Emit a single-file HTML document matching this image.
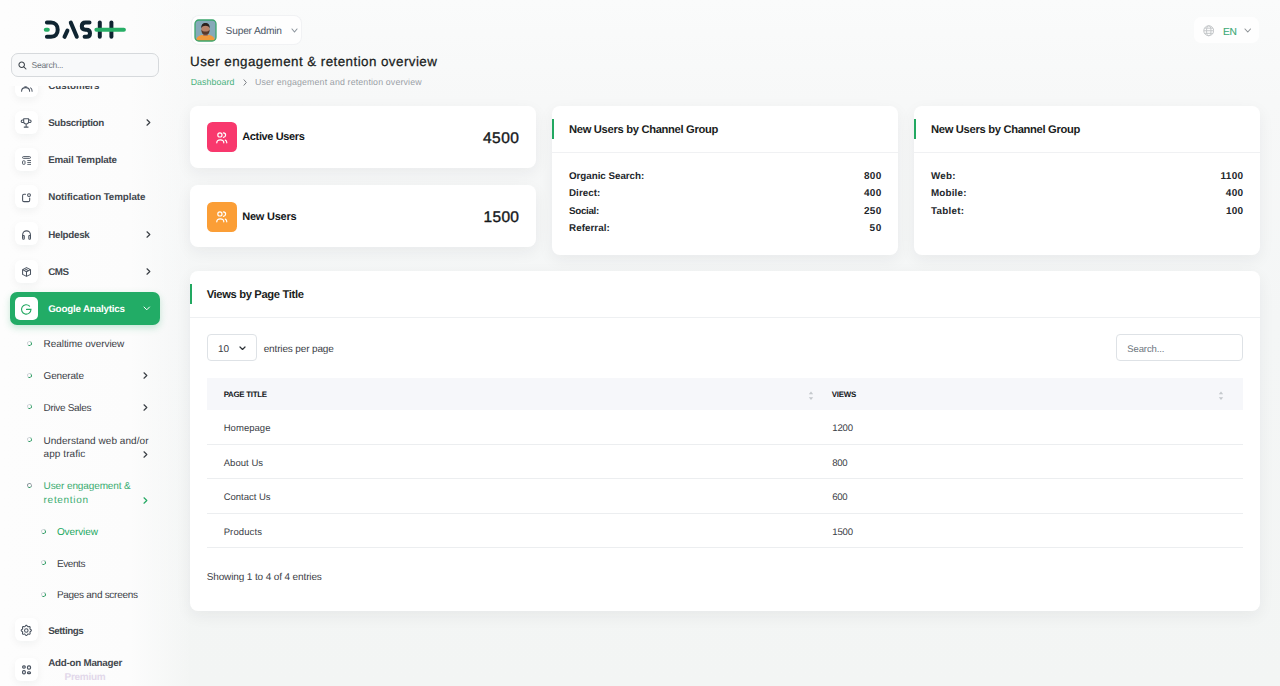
<!DOCTYPE html><html><head><meta charset="utf-8"><style>
*{box-sizing:border-box;margin:0;padding:0}
html,body{width:1280px;height:686px;overflow:hidden}
body{font-family:"Liberation Sans",sans-serif;text-rendering:geometricPrecision;background:linear-gradient(180deg,#fafbfb 0px,#f7f8f8 100px,#f4f6f6 320px,#f3f5f4 686px);position:relative;color:#1f2328}
.a{position:absolute;white-space:nowrap}
.t{position:absolute;white-space:nowrap}
#side{position:absolute;left:0;top:0;width:192px;height:686px;background:linear-gradient(90deg,#fdfdfd 0px,#fcfcfc 130px,rgba(252,252,252,0) 192px)}
.nb{position:absolute;width:23px;height:23px;background:#fff;border-radius:6px;box-shadow:0 3px 8px rgba(20,30,40,.05)}
.dot{position:absolute;width:5px;height:5px;border-radius:50%;border:1.2px solid #cfd4d8;border-right-color:#2f9c64;border-bottom-color:#2f9c64;transform:rotate(-10deg)}
.card{position:absolute;background:#fff;border-radius:8px;box-shadow:0 5px 16px rgba(30,40,50,.06)}
svg{display:block}
</style></head><body>
<div id="side">
<div class="a" style="left:0;top:86px;width:190px;height:600px;overflow:hidden">
<div class="a" style="left:0;top:-86px;width:190px;height:800px">
<div class="nb" style="left:15px;top:74.0px"></div>
<svg class="a" style="left:14px;top:73.5px" width="24" height="24" viewBox="0 0 24 24"><path d="M7.6 17.2C7.6 15 9.2 13.6 11.6 13.6C14 13.6 15.6 15 15.6 17.2M16.6 13.9C17.6 14.4 18.1 15.6 18.1 17.2" fill="none" stroke="#4a5360" stroke-width="1.05" stroke-linecap="round"/><circle cx="11.6" cy="10" r="2.1" fill="none" stroke="#4a5360" stroke-width="1.05"/></svg>
<div class="t" style="top:82px;font-size:9.8px;line-height:9.8px;font-weight:bold;color:#43484e;left:48.20px;">Customers</div>
<div class="nb" style="left:15px;top:110.5px"></div>
<svg class="a" style="left:14px;top:110px" width="24" height="24" viewBox="0 0 24 24"><path d="M9.7 8.7H14.6V11.6A2.45 2.45 0 0 1 9.7 11.6ZM9.7 10H8.4A1.2 1.2 0 0 0 8.4 12.4H9.9M14.6 10H15.9A1.2 1.2 0 0 1 15.9 12.4H14.4M12.15 14.2V17M10.2 17.1H14.1" fill="none" stroke="#4a5360" stroke-width="1.05" stroke-linecap="round" stroke-linejoin="round"/></svg>
<div class="t" style="top:119px;font-size:9.8px;line-height:9.8px;font-weight:bold;color:#43484e;letter-spacing:-0.352px;left:48.20px;">Subscription</div>
<svg class="a" style="left:146px;top:118.8px" width="5" height="7" viewBox="0 0 5 7"><path d="M1 .8 L3.8 3.5 L1 6.2" fill="none" stroke="#3a3f45" stroke-width="1.2" stroke-linecap="round" stroke-linejoin="round"/></svg>
<div class="nb" style="left:15px;top:147.8px"></div>
<svg class="a" style="left:14px;top:147px" width="24" height="24" viewBox="0 0 24 24"><rect x="8.55" y="9.6" width="7.95" height="1.75" rx=".85" fill="none" stroke="#4a5360" stroke-width=".95"/><rect x="8.55" y="13.8" width="2.45" height="3.5" rx=".7" fill="none" stroke="#4a5360" stroke-width=".95"/><path d="M13.3 13.5H17M13.3 15.45H17M13.3 17.4H17" stroke="#4a5360" stroke-width=".9"/></svg>
<div class="t" style="top:156px;font-size:9.8px;line-height:9.8px;font-weight:bold;color:#43484e;letter-spacing:-0.174px;left:48.20px;">Email Template</div>
<div class="nb" style="left:15px;top:185.0px"></div>
<svg class="a" style="left:14px;top:185px" width="24" height="24" viewBox="0 0 24 24"><path d="M11.5 9.3H10A1.4 1.4 0 0 0 8.6 10.7V15.2A1.4 1.4 0 0 0 10 16.6H14.3A1.4 1.4 0 0 0 15.7 15.2V13.1" fill="none" stroke="#4a5360" stroke-width="1.05" stroke-linecap="round"/><circle cx="15" cy="10.1" r="1.45" fill="none" stroke="#4a5360" stroke-width="1.05"/></svg>
<div class="t" style="top:193px;font-size:9.8px;line-height:9.8px;font-weight:bold;color:#43484e;letter-spacing:-0.085px;left:48.20px;">Notification Template</div>
<div class="nb" style="left:15px;top:222.2px"></div>
<svg class="a" style="left:14px;top:222px" width="24" height="24" viewBox="0 0 24 24"><path d="M8.65 16V12.75A3.9 3.9 0 0 1 16.45 12.75V16" fill="none" stroke="#4a5360" stroke-width="1.05"/><rect x="8.65" y="13.4" width="1.65" height="3.8" rx=".7" fill="none" stroke="#4a5360" stroke-width="1.05"/><rect x="14.8" y="13.4" width="1.65" height="3.8" rx=".7" fill="none" stroke="#4a5360" stroke-width="1.05"/></svg>
<div class="t" style="top:231px;font-size:9.8px;line-height:9.8px;font-weight:bold;color:#43484e;letter-spacing:-0.280px;left:48.20px;">Helpdesk</div>
<svg class="a" style="left:146px;top:230.5px" width="5" height="7" viewBox="0 0 5 7"><path d="M1 .8 L3.8 3.5 L1 6.2" fill="none" stroke="#3a3f45" stroke-width="1.2" stroke-linecap="round" stroke-linejoin="round"/></svg>
<div class="nb" style="left:15px;top:259.5px"></div>
<svg class="a" style="left:14px;top:259px" width="24" height="24" viewBox="0 0 24 24"><path d="M12.5 8.6L16.5 10.6V15.4L12.5 17.4L8.6 15.4V10.6ZM8.6 10.6L12.5 12.8L16.5 10.6M12.5 12.8V17.4M10.5 9.6L14.5 11.7" fill="none" stroke="#4a5360" stroke-width="1.05" stroke-linejoin="round"/></svg>
<div class="t" style="top:268px;font-size:9.8px;line-height:9.8px;font-weight:bold;color:#43484e;letter-spacing:-0.450px;left:48.20px;">CMS</div>
<svg class="a" style="left:146px;top:267.8px" width="5" height="7" viewBox="0 0 5 7"><path d="M1 .8 L3.8 3.5 L1 6.2" fill="none" stroke="#3a3f45" stroke-width="1.2" stroke-linecap="round" stroke-linejoin="round"/></svg>
<div class="a" style="left:10px;top:292.3px;width:150px;height:32.5px;background:#22ac66;border-radius:7px;box-shadow:0 3px 7px rgba(34,172,102,.25)"></div>
<div class="a" style="left:15px;top:297.2px;width:23px;height:23px;background:#fff;border-radius:5px"></div>
<svg class="a" style="left:14px;top:297px" width="24" height="24" viewBox="0 0 24 24"><path d="M15.57 9.08A4.7 4.7 0 1 0 16.95 12.4H12.5" fill="none" stroke="#22a861" stroke-width="1.1" stroke-linecap="round"/></svg>
<div class="t" style="top:305px;font-size:9.8px;line-height:9.8px;font-weight:bold;color:#fff;letter-spacing:-0.191px;left:48.20px;">Google Analytics</div>
<svg class="a" style="left:143.3px;top:306.2px" width="7.5" height="4.8" viewBox="0 0 7.5 4.8"><path d="M1 1 L3.75 3.8 L6.5 1" fill="none" stroke="#fff" stroke-width="1.0" stroke-linecap="round" stroke-linejoin="round"/></svg>
<div class="dot" style="left:27px;top:340.5px"></div>
<div class="t" style="top:340px;font-size:10px;line-height:10px;font-weight:normal;color:#3b4046;letter-spacing:-0.063px;left:43.60px;">Realtime overview</div>
<div class="dot" style="left:27px;top:372.6px"></div>
<div class="t" style="top:372px;font-size:10px;line-height:10px;font-weight:normal;color:#3b4046;letter-spacing:-0.186px;left:43.60px;">Generate</div>
<svg class="a" style="left:142.5px;top:372.1px" width="5" height="7" viewBox="0 0 5 7"><path d="M1 .8 L3.8 3.5 L1 6.2" fill="none" stroke="#3a3f45" stroke-width="1.2" stroke-linecap="round" stroke-linejoin="round"/></svg>
<div class="dot" style="left:27px;top:404.2px"></div>
<div class="t" style="top:404px;font-size:10px;line-height:10px;font-weight:normal;color:#3b4046;letter-spacing:-0.334px;left:43.60px;">Drive Sales</div>
<svg class="a" style="left:142.5px;top:403.7px" width="5" height="7" viewBox="0 0 5 7"><path d="M1 .8 L3.8 3.5 L1 6.2" fill="none" stroke="#3a3f45" stroke-width="1.2" stroke-linecap="round" stroke-linejoin="round"/></svg>
<div class="dot" style="left:27px;top:437px"></div>
<div class="t" style="top:437px;font-size:10px;line-height:10px;font-weight:normal;color:#3b4046;letter-spacing:0.057px;left:43.40px;">Understand web and/or</div>
<div class="t" style="top:450px;font-size:10px;line-height:10px;font-weight:normal;color:#3b4046;letter-spacing:0.062px;left:43.60px;">app trafic</div>
<svg class="a" style="left:142.5px;top:451px" width="5" height="7" viewBox="0 0 5 7"><path d="M1 .8 L3.8 3.5 L1 6.2" fill="none" stroke="#3a3f45" stroke-width="1.2" stroke-linecap="round" stroke-linejoin="round"/></svg>
<div class="dot" style="left:27px;top:483px;border-color:#8f9aa0;border-bottom-color:#2f9c64"></div>
<div class="t" style="top:482px;font-size:10px;line-height:10px;font-weight:normal;color:#3aac70;letter-spacing:-0.110px;left:43.60px;">User engagement &amp;</div>
<div class="t" style="top:496px;font-size:10px;line-height:10px;font-weight:normal;color:#3aac70;letter-spacing:0.697px;left:43.60px;">retention</div>
<svg class="a" style="left:142.5px;top:497px" width="5" height="7" viewBox="0 0 5 7"><path d="M1 .8 L3.8 3.5 L1 6.2" fill="none" stroke="#22a861" stroke-width="1.2" stroke-linecap="round" stroke-linejoin="round"/></svg>
<div class="dot" style="left:40.5px;top:528.6px"></div>
<div class="t" style="top:528px;font-size:10px;line-height:10px;font-weight:normal;color:#22a861;letter-spacing:-0.098px;left:56.90px;">Overview</div>
<div class="dot" style="left:40.5px;top:560.4px"></div>
<div class="t" style="top:560px;font-size:10px;line-height:10px;font-weight:normal;color:#3b4046;letter-spacing:-0.400px;left:56.90px;">Events</div>
<div class="dot" style="left:40.5px;top:592.0px"></div>
<div class="t" style="top:591px;font-size:10px;line-height:10px;font-weight:normal;color:#3b4046;letter-spacing:-0.283px;left:56.90px;">Pages and screens</div>
<div class="nb" style="left:15px;top:617.7px"></div>
<svg class="a" style="left:14px;top:617px" width="24" height="24" viewBox="0 0 24 24"><path d="M17.40 13.40 L17.32 13.73 L17.08 14.03 L16.76 14.29 L16.43 14.51 L16.16 14.71 L16.00 14.93 L15.95 15.20 L16.00 15.54 L16.08 15.93 L16.13 16.34 L16.08 16.71 L15.91 17.01 L15.61 17.18 L15.24 17.23 L14.83 17.18 L14.44 17.10 L14.10 17.05 L13.83 17.10 L13.61 17.26 L13.41 17.53 L13.19 17.86 L12.93 18.18 L12.63 18.42 L12.30 18.50 L11.97 18.42 L11.67 18.18 L11.41 17.86 L11.19 17.53 L10.99 17.26 L10.77 17.10 L10.50 17.05 L10.16 17.10 L9.77 17.18 L9.36 17.23 L8.99 17.18 L8.69 17.01 L8.52 16.71 L8.47 16.34 L8.52 15.93 L8.60 15.54 L8.65 15.20 L8.60 14.93 L8.44 14.71 L8.17 14.51 L7.84 14.29 L7.52 14.03 L7.28 13.73 L7.20 13.40 L7.28 13.07 L7.52 12.77 L7.84 12.51 L8.17 12.29 L8.44 12.09 L8.60 11.87 L8.65 11.60 L8.60 11.26 L8.52 10.87 L8.47 10.46 L8.52 10.09 L8.69 9.79 L8.99 9.62 L9.36 9.57 L9.77 9.62 L10.16 9.70 L10.50 9.75 L10.77 9.70 L10.99 9.54 L11.19 9.27 L11.41 8.94 L11.67 8.62 L11.97 8.38 L12.30 8.30 L12.63 8.38 L12.93 8.62 L13.19 8.94 L13.41 9.27 L13.61 9.54 L13.83 9.70 L14.10 9.75 L14.44 9.70 L14.83 9.62 L15.24 9.57 L15.61 9.62 L15.91 9.79 L16.08 10.09 L16.13 10.46 L16.08 10.87 L16.00 11.26 L15.95 11.60 L16.00 11.87 L16.16 12.09 L16.43 12.29 L16.76 12.51 L17.08 12.77 L17.32 13.07 L17.40 13.40Z" fill="none" stroke="#4a5360" stroke-width="1.05" stroke-linejoin="round"/><circle cx="12.3" cy="13.4" r="1.75" fill="none" stroke="#4a5360" stroke-width="1.05"/></svg>
<div class="t" style="top:627px;font-size:9.8px;line-height:9.8px;font-weight:bold;color:#43484e;letter-spacing:-0.437px;left:48.20px;">Settings</div>
<div class="nb" style="left:15px;top:657.5px"></div>
<svg class="a" style="left:14px;top:657px" width="24" height="24" viewBox="0 0 24 24"><g fill="none" stroke="#4a5360" stroke-width="1.2"><rect x="8.6" y="8.8" width="2.7" height="2.3" rx="1.1"/><rect x="13.5" y="8.8" width="3" height="3.4" rx="1.2"/><rect x="8.6" y="13.7" width="2.7" height="3.2" rx="1.1"/><rect x="13.5" y="14.8" width="3" height="1.9" rx=".95"/></g></svg>
<div class="t" style="top:659px;font-size:9.8px;line-height:9.8px;font-weight:bold;color:#43484e;letter-spacing:-0.246px;left:48.20px;">Add-on Manager</div>
<div class="t" style="top:673px;font-size:10px;line-height:10px;font-weight:bold;color:#e2d8ea;letter-spacing:-0.299px;left:64.60px;">Premium</div>
</div></div>
<div class="a" style="left:11px;top:53px;width:148px;height:24px;border:1px solid #d6d9dc;border-radius:7px;background:#f8f9fa"></div>
<svg class="a" style="left:17.5px;top:61.3px" width="9" height="9" viewBox="0 0 9 9"><circle cx="3.7" cy="3.7" r="2.75" fill="none" stroke="#3d444b" stroke-width="1.05"/><path d="M5.8 5.8L8 8" stroke="#3d444b" stroke-width="1.05" stroke-linecap="round"/></svg>
<div class="t" style="top:61px;font-size:8.5px;line-height:8.5px;font-weight:normal;color:#6f767c;letter-spacing:-0.254px;left:31.50px;">Search...</div>
<svg class="a" style="left:40px;top:17px" width="90" height="26" viewBox="0 0 90 26">
 <g fill="none" stroke="#0f2431" stroke-width="4" stroke-linecap="round" stroke-linejoin="round">
  <path d="M6.9 5.6 H11 C15.3 5.6 17.7 8.6 17.7 12.7 C17.7 16.8 15.3 19.8 11 19.8 H6.9"/>
  <path d="M30.8 5.6 L36.8 19.8"/>
  <path d="M24.5 19.8 L27.4 13.6"/>
  <path d="M49.5 5.6 H45.5 C43 5.6 41.8 7.3 41.8 9.3 C41.8 11.4 43 12.7 45.5 12.7 H46.5 C48.8 12.7 50 14.2 50 16.3 C50 18.5 48.8 19.8 46.5 19.8 H44.6"/>
  <path d="M59.8 5.6 V19.8"/>
  <path d="M71.4 5.6 V19.8"/>
 </g>
 <g fill="none" stroke="#27ae66" stroke-width="4" stroke-linecap="round">
  <path d="M5.8 12.7 H7.8"/>
  <path d="M56.4 12.7 H83.9"/>
 </g>
</svg>
</div>
<div class="a" style="left:190.5px;top:15px;width:111.5px;height:29.5px;background:rgba(255,255,255,.8);border:1px solid rgba(235,237,240,.7);border-radius:8px"></div>
<svg class="a" style="left:194px;top:18.5px" width="23" height="23" viewBox="0 0 23 23"><defs><clipPath id="av"><rect x="1" y="1" width="21" height="21" rx="3.8"/></clipPath></defs><g clip-path="url(#av)"><rect x="0" y="0" width="23" height="23" fill="#86a9b9"/><path d="M1.5 23C2 19 4 16.8 7.5 16H15.5C19 16.8 21 19 21.5 23Z" fill="#f29a3c"/><rect x="9.3" y="13" width="4.4" height="4" fill="#a9735a"/><ellipse cx="11.5" cy="10.2" rx="4.1" ry="5.2" fill="#b8836a"/><path d="M7.4 10.5C7.4 14.5 9 15.8 11.5 15.8C14 15.8 15.6 14.5 15.6 10.5C14.8 12.3 13.5 12.6 11.5 12.6C9.5 12.6 8.2 12.3 7.4 10.5Z" fill="#5a3a2c"/><path d="M7.2 9.5C7 5.8 8.8 4 11.5 4C14.2 4 16 5.8 15.8 9.5C15.2 7.6 14 6.8 11.5 6.8C9 6.8 7.8 7.6 7.2 9.5Z" fill="#2a211d"/></g><rect x="1" y="1" width="21" height="21" rx="3.8" fill="none" stroke="#3ba56c" stroke-width="1.3"/></svg>
<div class="t" style="top:27px;font-size:10.2px;line-height:10.2px;font-weight:normal;color:#4d5866;letter-spacing:-0.194px;left:225.60px;">Super Admin</div>
<svg class="a" style="left:290.8px;top:27.8px" width="7" height="5" viewBox="0 0 7 5"><path d="M1 1 L3.5 4 L6 1" fill="none" stroke="#8a939b" stroke-width="1.1" stroke-linecap="round" stroke-linejoin="round"/></svg>
<div class="t" style="top:55px;font-size:13.4px;line-height:13.4px;font-weight:normal;color:#1a1d21;letter-spacing:0.437px;left:190.10px;-webkit-text-stroke:0.25px #1a1d21;">User engagement &amp; retention overview</div>
<div class="t" style="top:78px;font-size:8.8px;line-height:8.8px;font-weight:normal;color:#48b27c;letter-spacing:0.082px;left:190.70px;">Dashboard</div>
<svg class="a" style="left:242.5px;top:78.5px" width="4.5" height="7" viewBox="0 0 4.5 7"><path d="M1 .8 L3.3 3.5 L1 6.2" fill="none" stroke="#7c8086" stroke-width="1.0" stroke-linecap="round" stroke-linejoin="round"/></svg>
<div class="t" style="top:78px;font-size:8.8px;line-height:8.8px;font-weight:normal;color:#9aa0a6;letter-spacing:0.154px;left:255.00px;">User engagement and retention overview</div>
<div class="a" style="left:1194px;top:17px;width:64.5px;height:25.5px;background:rgba(255,255,255,.8);border-radius:7px"></div>
<svg class="a" style="left:1202.5px;top:25.2px" width="11.5" height="11.5" viewBox="0 0 12 12"><g fill="none" stroke="#c2c5c8" stroke-width="1"><circle cx="6" cy="6" r="5.2"/><ellipse cx="6" cy="6" rx="2.3" ry="5.2"/><path d="M.8 6h10.4M1.6 3.3h8.8M1.6 8.7h8.8"/></g></svg>
<div class="t" style="top:28px;font-size:10.2px;line-height:10.2px;font-weight:normal;color:#3aa874;letter-spacing:-0.400px;left:1223.00px;-webkit-text-stroke:0.1px #3aa874;">EN</div>
<svg class="a" style="left:1243.8px;top:27.8px" width="7.5" height="5" viewBox="0 0 7.5 5"><path d="M1 1 L3.75 4 L6.5 1" fill="none" stroke="#8e9296" stroke-width="1.1" stroke-linecap="round" stroke-linejoin="round"/></svg>
<div class="card" style="left:190px;top:106px;width:345.5px;height:62px"></div>
<div class="a" style="left:207px;top:122.4px;width:30px;height:30px;border-radius:5.5px;background:#f8386d"></div>
<svg class="a" style="left:207px;top:122px" width="30" height="30" viewBox="0 0 30 30"><circle cx="12.9" cy="12.9" r="2.1" fill="none" stroke="#fff" stroke-width="1.2"/><path d="M16.4 10.9A2.2 2.2 0 0 1 16.4 15.3M9.8 20.8C9.8 18.9 11.2 17.9 13.3 17.9C15.4 17.9 16.8 18.9 16.8 20.8M18.3 18.1C19.3 18.6 19.8 19.6 19.8 20.8" fill="none" stroke="#fff" stroke-width="1.2" stroke-linecap="round"/></svg>
<div class="t" style="top:132px;font-size:11px;line-height:11px;font-weight:bold;color:#15181b;letter-spacing:-0.378px;left:242.30px;">Active Users</div>
<div class="t" style="top:131px;font-size:15.5px;line-height:15.5px;font-weight:normal;color:#15181b;letter-spacing:0.505px;right:761.10px;margin-right:-0.505px;-webkit-text-stroke:0.4px #15181b;">4500</div>
<div class="card" style="left:190px;top:185.4px;width:345.5px;height:62px"></div>
<div class="a" style="left:207px;top:201.8px;width:30px;height:30px;border-radius:5.5px;background:#fb9e36"></div>
<svg class="a" style="left:207px;top:201.4px" width="30" height="30" viewBox="0 0 30 30"><circle cx="12.9" cy="12.9" r="2.1" fill="none" stroke="#fff" stroke-width="1.2"/><path d="M16.4 10.9A2.2 2.2 0 0 1 16.4 15.3M9.8 20.8C9.8 18.9 11.2 17.9 13.3 17.9C15.4 17.9 16.8 18.9 16.8 20.8M18.3 18.1C19.3 18.6 19.8 19.6 19.8 20.8" fill="none" stroke="#fff" stroke-width="1.2" stroke-linecap="round"/></svg>
<div class="t" style="top:212px;font-size:11px;line-height:11px;font-weight:bold;color:#15181b;letter-spacing:-0.246px;left:242.30px;">New Users</div>
<div class="t" style="top:210px;font-size:15.5px;line-height:15.5px;font-weight:normal;color:#15181b;letter-spacing:0.272px;right:761.10px;margin-right:-0.272px;-webkit-text-stroke:0.4px #15181b;">1500</div>
<div class="card" style="left:552px;top:106px;width:345.70000000000005px;height:148.7px"></div>
<div class="a" style="left:552px;top:118.8px;width:2.1px;height:20px;background:#22a861"></div>
<div class="t" style="top:125px;font-size:11.2px;line-height:11.2px;font-weight:bold;color:#1a1d21;letter-spacing:-0.315px;left:569.00px;">New Users by Channel Group</div>
<div class="a" style="left:552px;top:152px;width:345.70000000000005px;height:1px;background:#f0f1f3"></div>
<div class="t" style="top:172px;font-size:9.8px;line-height:9.8px;font-weight:bold;color:#23272b;letter-spacing:-0.035px;left:569.00px;">Organic Search:</div>
<div class="t" style="top:172px;font-size:10px;line-height:10px;font-weight:bold;color:#23272b;letter-spacing:0.306px;right:398.80px;margin-right:-0.306px;">800</div>
<div class="t" style="top:189px;font-size:9.8px;line-height:9.8px;font-weight:bold;color:#23272b;letter-spacing:0.042px;left:569.00px;">Direct:</div>
<div class="t" style="top:189px;font-size:10px;line-height:10px;font-weight:bold;color:#23272b;letter-spacing:0.306px;right:398.80px;margin-right:-0.306px;">400</div>
<div class="t" style="top:207px;font-size:9.8px;line-height:9.8px;font-weight:bold;color:#23272b;letter-spacing:-0.304px;left:569.00px;">Social:</div>
<div class="t" style="top:207px;font-size:10px;line-height:10px;font-weight:bold;color:#23272b;letter-spacing:0.306px;right:398.80px;margin-right:-0.306px;">250</div>
<div class="t" style="top:224px;font-size:9.8px;line-height:9.8px;font-weight:bold;color:#23272b;letter-spacing:0.063px;left:569.00px;">Referral:</div>
<div class="t" style="top:224px;font-size:10px;line-height:10px;font-weight:bold;color:#23272b;letter-spacing:0.475px;right:398.80px;margin-right:-0.475px;">50</div>
<div class="card" style="left:914px;top:106px;width:345.5999999999999px;height:148.7px"></div>
<div class="a" style="left:914px;top:118.8px;width:2.1px;height:20px;background:#22a861"></div>
<div class="t" style="top:125px;font-size:11.2px;line-height:11.2px;font-weight:bold;color:#1a1d21;letter-spacing:-0.315px;left:931.00px;">New Users by Channel Group</div>
<div class="a" style="left:914px;top:152px;width:345.5999999999999px;height:1px;background:#f0f1f3"></div>
<div class="t" style="top:172px;font-size:9.8px;line-height:9.8px;font-weight:bold;color:#23272b;letter-spacing:0.211px;left:931.00px;">Web:</div>
<div class="t" style="top:172px;font-size:10px;line-height:10px;font-weight:bold;color:#23272b;letter-spacing:0.332px;right:36.90px;margin-right:-0.332px;">1100</div>
<div class="t" style="top:189px;font-size:9.8px;line-height:9.8px;font-weight:bold;color:#23272b;letter-spacing:0.184px;left:931.00px;">Mobile:</div>
<div class="t" style="top:189px;font-size:10px;line-height:10px;font-weight:bold;color:#23272b;letter-spacing:0.306px;right:36.90px;margin-right:-0.306px;">400</div>
<div class="t" style="top:207px;font-size:9.8px;line-height:9.8px;font-weight:bold;color:#23272b;letter-spacing:0.285px;left:931.00px;">Tablet:</div>
<div class="t" style="top:207px;font-size:10px;line-height:10px;font-weight:bold;color:#23272b;letter-spacing:0.156px;right:36.90px;margin-right:-0.156px;">100</div>
<div class="card" style="left:190px;top:271px;width:1070px;height:340.3px"></div>
<div class="a" style="left:190px;top:284.3px;width:2.1px;height:20px;background:#22a861"></div>
<div class="t" style="top:290px;font-size:11.2px;line-height:11.2px;font-weight:bold;color:#1a1d21;letter-spacing:-0.347px;left:206.70px;">Views by Page Title</div>
<div class="a" style="left:190px;top:317px;width:1070px;height:1px;background:#eef0f2"></div>
<div class="a" style="left:206.7px;top:334.2px;width:50px;height:27.3px;border:1px solid #dee2e6;border-radius:4px;background:#fff"></div>
<div class="t" style="top:345px;font-size:10px;line-height:10px;font-weight:normal;color:#3b4046;left:218.00px;">10</div>
<svg class="a" style="left:238.5px;top:345.5px" width="7" height="4.5" viewBox="0 0 7 4.5"><path d="M1 1 L3.5 3.5 L6 1" fill="none" stroke="#2c3136" stroke-width="1.2" stroke-linecap="round" stroke-linejoin="round"/></svg>
<div class="t" style="top:345px;font-size:10px;line-height:10px;font-weight:normal;color:#3b4046;letter-spacing:-0.145px;left:263.70px;">entries per page</div>
<div class="a" style="left:1116.2px;top:334.3px;width:126.7px;height:27.1px;border:1px solid #dee2e6;border-radius:4px;background:#fff"></div>
<div class="t" style="top:345px;font-size:9.5px;line-height:9.5px;font-weight:normal;color:#6c757d;letter-spacing:-0.116px;left:1127.30px;">Search...</div>
<div class="a" style="left:206.7px;top:377.9px;width:1036.2px;height:32.6px;background:#f6f7fa"></div>
<div class="t" style="top:391px;font-size:7.9px;line-height:7.9px;font-weight:bold;color:#15181b;letter-spacing:-0.288px;left:223.70px;">PAGE TITLE</div>
<div class="t" style="top:391px;font-size:7.9px;line-height:7.9px;font-weight:bold;color:#15181b;letter-spacing:-0.184px;left:831.70px;">VIEWS</div>
<svg class="a" style="left:807.8px;top:389.5px" width="6" height="11.5" viewBox="0 0 6 11.5"><path d="M.8 4.3L3 1.5l2.2 2.8zM.8 7.2L3 10l2.2-2.8z" fill="#c4c8cc"/></svg>
<svg class="a" style="left:1218.2px;top:389.5px" width="6" height="11.5" viewBox="0 0 6 11.5"><path d="M.8 4.3L3 1.5l2.2 2.8zM.8 7.2L3 10l2.2-2.8z" fill="#c4c8cc"/></svg>
<div class="t" style="top:424px;font-size:9.5px;line-height:9.5px;font-weight:normal;color:#3b4046;letter-spacing:0.045px;left:223.70px;">Homepage</div>
<div class="t" style="top:424px;font-size:9.6px;line-height:9.6px;font-weight:normal;color:#3b4046;letter-spacing:-0.148px;left:832.20px;">1200</div>
<div class="a" style="left:206.7px;top:443.80px;width:1036.2px;height:1px;background:#eceef0"></div>
<div class="t" style="top:459px;font-size:9.5px;line-height:9.5px;font-weight:normal;color:#3b4046;letter-spacing:0.046px;left:223.70px;">About Us</div>
<div class="t" style="top:459px;font-size:9.6px;line-height:9.6px;font-weight:normal;color:#3b4046;letter-spacing:-0.258px;left:832.20px;">800</div>
<div class="a" style="left:206.7px;top:478.20px;width:1036.2px;height:1px;background:#eceef0"></div>
<div class="t" style="top:493px;font-size:9.5px;line-height:9.5px;font-weight:normal;color:#3b4046;letter-spacing:-0.022px;left:223.70px;">Contact Us</div>
<div class="t" style="top:493px;font-size:9.6px;line-height:9.6px;font-weight:normal;color:#3b4046;letter-spacing:-0.258px;left:832.20px;">600</div>
<div class="a" style="left:206.7px;top:512.60px;width:1036.2px;height:1px;background:#eceef0"></div>
<div class="t" style="top:528px;font-size:9.5px;line-height:9.5px;font-weight:normal;color:#3b4046;letter-spacing:0.100px;left:223.70px;">Products</div>
<div class="t" style="top:528px;font-size:9.6px;line-height:9.6px;font-weight:normal;color:#3b4046;letter-spacing:-0.148px;left:832.20px;">1500</div>
<div class="a" style="left:206.7px;top:547.00px;width:1036.2px;height:1px;background:#eceef0"></div>
<div class="t" style="top:573px;font-size:10px;line-height:10px;font-weight:normal;color:#3b4046;letter-spacing:-0.124px;left:206.70px;">Showing 1 to 4 of 4 entries</div>
</body></html>
